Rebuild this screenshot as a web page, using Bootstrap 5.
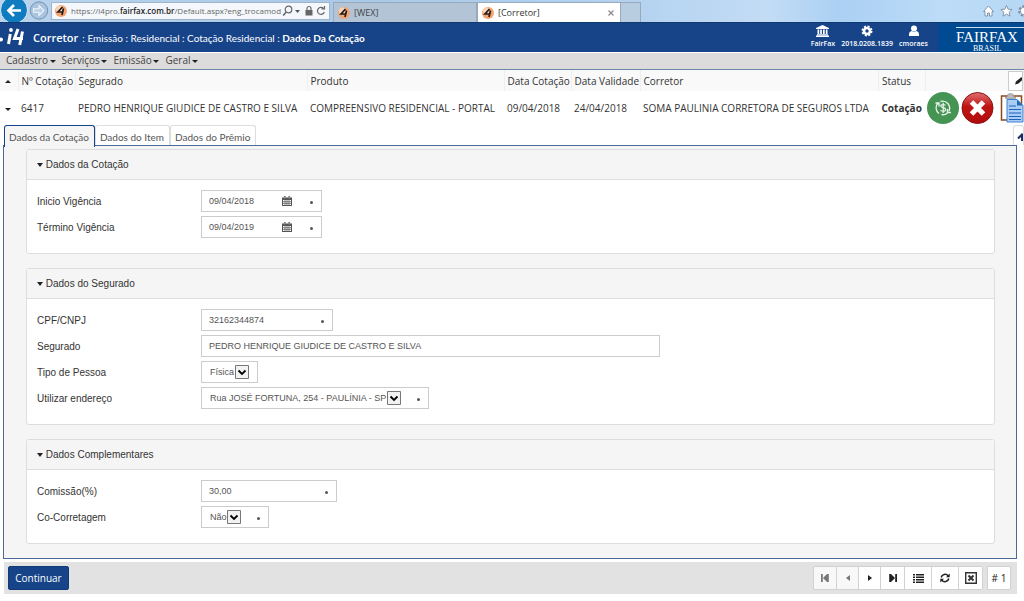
<!DOCTYPE html>
<html lang="pt-BR">
<head>
<meta charset="utf-8">
<meta name="viewport" content="width=device-width, initial-scale=1">
<title>[Corretor]</title>
<link href="https://cdn.jsdelivr.net/npm/bootstrap@5.3.0/dist/css/bootstrap.min.css" rel="stylesheet">
<style>
:root{--navy:#174489;--line:#4a6a9c}
body{font:10px/14px "Open Sans","Noto Sans",sans-serif;color:#333;background:#fff;overflow-x:hidden}
a{color:inherit;text-decoration:none}
svg{display:block;flex:none}
button{font:inherit}

.browser-bar{height:22px;background:linear-gradient(90deg,#b9d3ec 0,#a9c9e8 34%,#b4d2f0 62%,#c3dcf5 75%,#abd0f3 82%,#bcdcf8 92%,#b7d8f4 100%);overflow:hidden}
.back-slot{width:51px}
.url-box{width:279px;height:18px;margin-top:2px;background:#f4f8fc;border:1px solid #9fb5cb;padding:0 3px}
.url-text{font-size:8px;color:#666;white-space:nowrap}
.url-text b{color:#222;font-weight:600}
.win-tabs{padding-top:2px;margin-left:3px}
.win-tab{height:20px;width:144px;font:9px/18px "Open Sans",sans-serif;color:#444;background:#b3c4d6;border:1px solid #97a9bb;border-bottom:0;padding:0 6px 0 4px;gap:4px}
.win-tab.current{background:#fff;color:#333}
.win-tab.fresh{width:20px;background:#b9cde0;border-left:0}

.app-head{background:var(--navy);color:#fff;height:30px;border-top:1px solid #10396f;font-family:Lato,sans-serif}
.app-head .role{font:600 11px/16px "Open Sans",sans-serif}
.tools{gap:6px;padding:2px 10px 0 0}
.tool{font:600 7px/8px "Open Sans",sans-serif;gap:3px}
.brand{width:86px;background:#004a91;font-family:"Liberation Serif",serif;padding-left:18px}
.brand-name{font-size:15px;line-height:16px;border-top:1px solid #d4e0f0;margin-top:4px;padding-top:1px}
.brand-sub{font-size:8px;line-height:8px;padding-left:17px}

.menu-bar{height:18px;background:#dcdcdc;border-top:1px solid #fff;border-bottom:1px solid #6b85a8;padding-left:6px;gap:6px}
.menu-bar a{line-height:15px;color:#444}
.caret{display:inline-block;border:3px solid transparent;border-top-color:#222;border-bottom:0;vertical-align:middle}
.menu-bar .caret{margin-left:-1px}
.caret.up{border-top:0;border-bottom:3px solid #222}

.quote{table-layout:fixed;width:100%;margin:0}
.quote th,.quote td{padding:0 0 0 3px;white-space:nowrap;overflow:hidden;vertical-align:middle}
.quote th:first-child,.quote td:first-child{padding-left:5px}
.quote th{font-weight:400;height:21px;background:#f9f9f9;border-right:1px solid #eee}
.quote td{height:34px}
.quote .edge{padding:0}
.corner{border:1px solid #ccc;background:#fff;width:15px;height:20px;padding:1px 0 0 6px;overflow:hidden}
.icon-btn{border:0;background:none;padding:0}

.tab-strip{height:21px;padding-left:4px;margin-bottom:-1px;position:relative}
.tab-strip button{font:10px/19px Lato,sans-serif;border:1px solid #ddd;border-bottom:0;border-radius:3px 3px 0 0;background:#fff;color:#555;padding:2px 5px 0 4px;height:20px}
.tab-strip button.active{background:#f5f5f5;border-color:var(--navy);height:22px}
.tab-strip button.fold{width:11px;padding:3px 0 0 3px}
.pane{background:#f5f5f5;border:1px solid var(--line);margin:0 7px 0 3px;padding:3px 21px 14px 22px;gap:14px}
.box{border:1px solid #ddd;border-radius:3px;background:#fff;font-family:"Liberation Sans",sans-serif}
.box-head{font:10px/14px "Liberation Sans",sans-serif;background:#f5f5f5;border-bottom:1px solid #ddd;padding:8px 10px 7px;margin:0;color:#333}
.box-head .caret{border-top-width:4px}
.box-body{padding:10px 10px 15px;display:grid;gap:4px}
.line-row{display:grid;grid-template-columns:164px 1fr;align-items:center}
.line-row>label{line-height:14px;padding-top:2px}
.field{border:1px solid #ccc;background:#fff;height:22px;display:flex;align-items:center;padding:0 8px 0 7px;color:#555;justify-self:start}
.field input,.field select{font:9px/12px "Liberation Sans",sans-serif;color:#555;border:0;background:transparent;padding:0;outline:0;min-width:0}
.field input{flex:1}
.field select{appearance:none;height:14px;padding-right:14px;padding-left:1px;background:url("data:image/svg+xml,%3Csvg xmlns='http://www.w3.org/2000/svg' width='14' height='14'%3E%3Cpath d='M.5.5h13v13H.5z' fill='%23f2f2f2' stroke='%23777'/%3E%3Cpath d='M3.5 5.5 7 9l3.500-3.500' fill='none' stroke='%23000' stroke-width='1.800'/%3E%3C/svg%3E") right center no-repeat}
.cal-btn{margin-right:18px}
.req{width:3px;height:3px;border-radius:50%;background:#555;flex:none;margin-top:3px}
.w-date{width:121px}.w-doc{width:132px}.w-name{width:459px}.w-pct{width:136px}
.w-name,.w-doc,.w-pct{max-width:100%}

.foot-bar{background:#e2e2e2;margin:3px 7px 0 4px;padding:4px 6px 4px 4px;height:32px}
.go{background:var(--navy);color:#fff;border:1px solid #123a78;border-radius:2px;height:24px;width:61px;font-size:10px;padding:0}
.pager button{height:24px;width:27px;border:1px solid #d2d2d2;border-left-width:0;background:#fff;padding:0;display:flex;align-items:center;justify-content:center;color:#222}
.pager button.narrow{width:22px}
.pager button.mid{width:24px}
.pager button:first-child{border-left-width:1px;border-radius:2px 0 0 2px}
.pager button:last-child{border-radius:0 2px 2px 0}
.pager button:disabled{color:#777;background:#f8f8f8}
</style>
</head>
<body>
<svg width="0" height="0" class="position-absolute" aria-hidden="true">
  <symbol id="ball" viewBox="0 0 12 12"><circle cx="6" cy="6" r="6" fill="#f3a46f"/><circle cx="4.500" cy="4" r="3.500" fill="#fbd3b4"/><path d="M7.500 2 3 7h4.500M8.500 3.500 7 10" fill="none" stroke="#221a18" stroke-width="1.700"/></symbol>
  <symbol id="cal" viewBox="0 0 10 10"><path d="M0 1.500h10V10H0z" fill="#555"/><path d="M1 4h8v5H1z" fill="#fff"/><path d="M3 4v5M5 4v5M7 4v5M1 5.700h8M1 7.400h8" stroke="#555" stroke-width=".7"/><path d="M2.700 0v3M7.300 0v3" stroke="#555" stroke-width="1.600"/><path d="M2.700.5v2M7.300.5v2" stroke="#fff" stroke-width=".5"/></symbol>
</svg>

<div class="browser-bar d-flex">
  <div class="back-slot d-flex flex-shrink-0">
    <button class="icon-btn" aria-label="Voltar"><svg width="29" height="22" viewBox="0 0 29 22"><circle cx="14" cy="10" r="13.500" fill="#0f7cc0" stroke="#d8e8f5"/><path d="M21 10.500H9M14 5l-5.500 5.500L14 16" fill="none" stroke="#fff" stroke-width="2.700"/></svg></button>
    <button class="icon-btn" aria-label="Avançar"><svg width="20" height="22" viewBox="0 0 20 22"><circle cx="10" cy="10.500" r="8.700" fill="#a9c4df" stroke="#7692b0"/><path d="M4.500 8.700h5.500V5.500l5 5-5 5v-3.200H4.500z" fill="#b9d0e6" stroke="#f0f6fb" stroke-width="1.100"/></svg></button>
  </div>
  <div class="url-box d-flex align-items-center flex-shrink-0">
    <svg width="12" height="12"><use href="#ball"/></svg>
    <a href="#" class="url-text flex-grow-1 ps-1">https://i4pro.<b>fairfax.com.br</b>/Default.aspx?eng_trocamod</a>
    <svg width="44" height="12" viewBox="0 0 44 12" fill="none" stroke="#666"><circle cx="6.500" cy="4.500" r="3.300" stroke-width="1.200"/><path d="m4.200 7-3 3.500" stroke-width="1.600"/><path d="M13 5h5l-2.500 3z" fill="#555" stroke="none"/><path d="M25 5V3.500a2 2 0 0 1 4 0V5" stroke-width="1.200"/><path d="M23.500 5h7v5.500h-7z" fill="#666" stroke="none"/><path d="M41.500 3.500a3.500 3.500 0 1 0 .8 3.500M42.500 1v3h-3" stroke-width="1.200"/></svg>
  </div>
  <div class="win-tabs d-flex">
    <a href="#" class="win-tab d-flex align-items-center"><svg width="12" height="12"><use href="#ball"/></svg>[WEX]</a>
    <a href="#" class="win-tab current d-flex align-items-center"><svg width="12" height="12"><use href="#ball"/></svg><span class="flex-grow-1">[Corretor]</span><svg width="6" height="6" viewBox="0 0 6 6"><path d="m.5.5 5 5m0-5-5 5" stroke="#8a8a8a" stroke-width="1.200"/></svg></a>
    <a href="#" class="win-tab fresh" aria-label="Nova guia"></a>
  </div>
  <div class="ms-auto d-flex align-items-center">
    <svg width="42" height="14" viewBox="0 0 42 14" fill="#fff" stroke="#7b8fa5" stroke-width=".9"><path d="m1.500 7.500 5-5.500 5 5.500H10V12H7.500V9h-2v3H3V7.500z"/><path d="m24.500 1.500 1.600 3.700 4 .3-3 2.700.9 4-3.500-2.200-3.500 2.200.9-4-3-2.700 4-.3z"/><circle cx="42" cy="7" r="4.500" stroke-width="2.600" stroke-dasharray="2.300 1.500"/><circle cx="42" cy="7" r="3.800"/></svg>
  </div>
</div>

<header class="app-head d-flex">
  <div class="d-flex align-items-center flex-grow-1">
    <svg width="33" height="26" viewBox="0 0 33 26"><circle cx="1" cy="14.500" r="2" fill="#fff"/><path d="M10.300 9 8.500 19" stroke="#fff" stroke-width="3"/><circle cx="11" cy="5" r="1.900" fill="#fff"/><path d="m18 4-3.500 9.500H23M22.500 6.500l-2.800 13.500" fill="none" stroke="#fff" stroke-width="3"/></svg>
    <span class="role">Corretor</span>
    <span class="ms-1">: Emissão : Residencial : Cotação Residencial : <b>Dados Da Cotação</b></span>
  </div>
  <div class="tools d-flex">
    <a href="#" class="tool d-flex flex-column align-items-center"><svg width="13" height="12" viewBox="0 0 13 12" fill="#fff"><path d="M6.500 0 13 3v1H0V3zM1.500 4.500h1.700V9H1.500zM4.200 4.500h1.700V9H4.200zM7 4.500h1.700V9H7zM9.800 4.500h1.700V9H9.800zM1 9.300h11v.9H1zM0 10.600h13V12H0z"/></svg>FairFax</a>
    <a href="#" class="tool d-flex flex-column align-items-center"><svg width="12" height="12" viewBox="0 0 12 12" fill="none" stroke="#fff"><circle cx="6" cy="6" r="3" stroke-width="2.600"/><circle cx="6" cy="6" r="4.700" stroke-width="1.600" stroke-dasharray="2.100 1.590"/></svg>2018.0208.1839</a>
    <a href="#" class="tool d-flex flex-column align-items-center"><svg width="12" height="12" viewBox="0 0 12 12" fill="#fff"><circle cx="6" cy="3.500" r="3"/><path d="M1 11V9q0-2.500 2.700-3Q6 7.500 8.300 6 11 6.500 11 9v2z"/></svg>cmoraes</a>
  </div>
  <div class="brand"><div class="brand-name">FAIRFAX</div><div class="brand-sub">BRASIL</div></div>
</header>

<nav class="menu-bar d-flex">
  <a href="#">Cadastro <i class="caret"></i></a>
  <a href="#">Serviços <i class="caret"></i></a>
  <a href="#">Emissão <i class="caret"></i></a>
  <a href="#">Geral <i class="caret"></i></a>
</nav>

<main>
<table class="quote">
  <colgroup><col style="width:18px"><col style="width:57px"><col style="width:232px"><col style="width:197px"><col style="width:67px"><col style="width:69px"><col><col style="width:47px"><col style="width:98px"></colgroup>
  <thead><tr>
    <th scope="col"><i class="caret up"></i></th><th scope="col">Nº Cotação</th><th scope="col">Segurado</th><th scope="col">Produto</th><th scope="col">Data Cotação</th><th scope="col">Data Validade</th><th scope="col">Corretor</th><th scope="col">Status</th>
    <th scope="col" class="edge"><button class="corner d-block ms-auto" aria-label="Editar"><svg width="9" height="10" viewBox="0 0 9 10"><path d="m0 8.500 1-3L6.500 1l2 2L3.500 7.500z" fill="#222"/></svg></button></th>
  </tr></thead>
  <tbody><tr>
    <td><i class="caret"></i></td><td>6417</td><td>PEDRO HENRIQUE GIUDICE DE CASTRO E SILVA</td><td>COMPREENSIVO RESIDENCIAL - PORTAL</td><td>09/04/2018</td><td>24/04/2018</td><td>SOMA PAULINIA CORRETORA DE SEGUROS LTDA</td><td class="fw-bold">Cotação</td>
    <td class="edge"><div class="d-flex">
      <button class="icon-btn" aria-label="Recalcular"><svg width="34" height="34" viewBox="0 0 34 34"><circle cx="17" cy="17" r="16" fill="#459453"/><g fill="none" stroke="#e6f3e8" stroke-width="1.400"><path d="M13 22.500A7 7 0 0 1 12 12M14.500 10.500A7 7 0 0 1 23 20M21.500 22a7 7 0 0 1-6 1.500M9.500 12h3.500v3.500M25 21.500h-3.500V18"/><path d="M19.500 14.300q-2.200-1.300-4.200-.4-1.500 1.800 1.700 2.800 3.700.9 2.200 3-2 1.200-4.700-.2M17.200 11.800V22" stroke-width="1.300"/></g></svg></button>
      <button class="icon-btn" aria-label="Cancelar"><svg width="34" height="34" viewBox="0 0 34 34"><defs><linearGradient id="red" x2="0" y2="1"><stop stop-color="#e07070"/><stop offset=".45" stop-color="#c01414"/><stop offset="1" stop-color="#b00c0c"/></linearGradient></defs><circle cx="17.500" cy="17" r="15.500" fill="url(#red)" stroke="#8d1313"/><path d="m11.500 11 12 12m0-12-12 12" stroke="#fff" stroke-width="5"/></svg></button>
      <button class="icon-btn ms-1" aria-label="Copiar"><svg width="30" height="34" viewBox="0 0 30 34"><path d="M3.500 5h20v24h-20z" fill="#fff" stroke="#8a4a22" stroke-width="1.500"/><path d="M9 6q0-3.500 3.500-3.500T16 6h1.500v1.500H7.500V6z" fill="#b9b9b9" stroke="#888" stroke-width=".6"/><path d="M9 8.500h10l6 6V31H9z" fill="#aacdf5" stroke="#3f83d2"/><path d="M19 8.500v6h6z" fill="#2467bd"/><path d="M11 15h7M11 18.500h12M11 22h12M11 25.500h12M11 28.500h12" stroke="#1d62bd" stroke-width="1.200"/></svg></button>
    </div></td>
  </tr></tbody>
</table>

<div class="tab-strip d-flex">
  <button class="active">Dados da Cotação</button>
  <button>Dados do Item</button>
  <button>Dados do Prêmio</button>
  <button class="fold ms-auto overflow-hidden" aria-label="Recolher"><svg width="8" height="10" viewBox="0 0 8 10"><path d="M1 6.500 5 2.500l4 4M5 4v5" fill="none" stroke="#1b2c66" stroke-width="2"/></svg></button>
</div>

<div class="pane d-grid">
  <section class="box">
    <h2 class="box-head"><i class="caret"></i> Dados da Cotação</h2>
    <div class="box-body">
      <div class="line-row"><label for="ini">Inicio Vigência</label><div class="field w-date"><input id="ini" value="09/04/2018"><button class="icon-btn cal-btn" aria-label="Calendário"><svg width="10" height="10"><use href="#cal"/></svg></button><i class="req"></i></div></div>
      <div class="line-row"><label for="fim">Término Vigência</label><div class="field w-date"><input id="fim" value="09/04/2019"><button class="icon-btn cal-btn" aria-label="Calendário"><svg width="10" height="10"><use href="#cal"/></svg></button><i class="req"></i></div></div>
    </div>
  </section>
  <section class="box">
    <h2 class="box-head"><i class="caret"></i> Dados do Segurado</h2>
    <div class="box-body">
      <div class="line-row"><label for="cpf">CPF/CNPJ</label><div class="field w-doc"><input id="cpf" value="32162344874"><i class="req"></i></div></div>
      <div class="line-row"><label for="seg">Segurado</label><div class="field w-name"><input id="seg" value="PEDRO HENRIQUE GIUDICE DE CASTRO E SILVA"></div></div>
      <div class="line-row"><label for="tipo">Tipo de Pessoa</label><div class="field"><select id="tipo"><option>Física</option></select></div></div>
      <div class="line-row"><label for="end">Utilizar endereço</label><div class="field"><select id="end"><option>Rua JOSÉ FORTUNA, 254 - PAULÍNIA - SP</option></select><i class="req ms-3"></i></div></div>
    </div>
  </section>
  <section class="box">
    <h2 class="box-head"><i class="caret"></i> Dados Complementares</h2>
    <div class="box-body">
      <div class="line-row"><label for="com">Comissão(%)</label><div class="field w-pct"><input id="com" value="30,00"><i class="req"></i></div></div>
      <div class="line-row"><label for="co">Co-Corretagem</label><div class="field"><select id="co"><option>Não</option></select><i class="req ms-3"></i></div></div>
    </div>
  </section>
</div>
</main>

<footer class="foot-bar d-flex justify-content-between">
  <button class="go">Continuar</button>
  <div class="d-flex gap-1">
    <div class="pager d-flex">
      <button disabled class="mid" aria-label="Primeiro"><svg width="8" height="8" viewBox="0 0 8 8" fill="currentColor"><path d="M0 0h1.800v8H0zM2 4l4-4v8zM6 0h1.800v8H6z"/></svg></button>
      <button disabled class="narrow" aria-label="Anterior"><svg width="4" height="6" viewBox="0 0 4 6" fill="currentColor"><path d="M0 3 4 0v6z"/></svg></button>
      <button class="narrow" aria-label="Próximo"><svg width="4" height="6" viewBox="0 0 4 6" fill="currentColor"><path d="M4 3 0 0v6z"/></svg></button>
      <button class="mid" aria-label="Último"><svg width="8" height="8" viewBox="0 0 8 8" fill="currentColor"><path d="M6.200 0H8v8H6.200zM6 4 2 0v8zM.2 0H2v8H.2z"/></svg></button>
      <button aria-label="Lista"><svg width="11" height="9" viewBox="0 0 11 9" fill="currentColor"><path d="M0 0h2v1.500H0zM3 0h8v1.500H3zM0 2.500h2V4H0zM3 2.500h8V4H3zM0 5h2v1.500H0zM3 5h8v1.500H3zM0 7.500h2V9H0zM3 7.500h8V9H3z"/></svg></button>
      <button aria-label="Atualizar"><svg width="10" height="10" viewBox="0 0 10 10" fill="none" stroke="currentColor" stroke-width="1.500"><path d="M1.200 4.500a4 4 0 0 1 7-1.700M8.800 5.500a4 4 0 0 1-7 1.700"/><path d="M9.700.5v3.700H6zM.3 9.500V5.800H4z" fill="currentColor" stroke="none"/></svg></button>
      <button class="mid" aria-label="Excel"><svg width="12" height="12" viewBox="0 0 12 12" fill="none" stroke="#333"><path d="M.7.700h10.600v10.600H.7z" stroke-width="1.400"/><path d="m3.500 3.500 5 5m0-5-5 5" stroke-width="2"/></svg></button>
    </div>
    <div class="pager"><button class="mid"># 1</button></div>
  </div>
</footer>
<script src="https://cdn.jsdelivr.net/npm/bootstrap@5.3.0/dist/js/bootstrap.bundle.min.js"></script>
</body>
</html>
